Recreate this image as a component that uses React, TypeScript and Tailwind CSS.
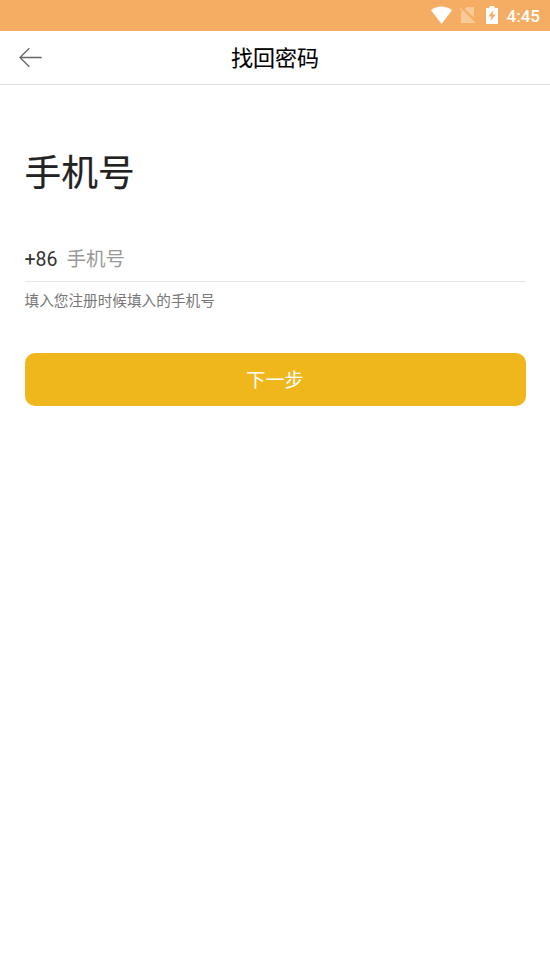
const StatusBar = () => (
  <div className="flex h-[30.5px] items-center justify-end bg-[#f5ad63] pr-2.5 text-white">
    <svg className="mr-[7px]" width="22" height="18" viewBox="0 0 22 18">
      <path d="M10.5 18 0 4.2Q4.8 0.5 10.5 0.5T21 4.2Z" fill="currentColor" />
    </svg>
    <svg className="mr-2.5 opacity-35" width="16" height="18" viewBox="0 0 16 18">
      <path d="M6.5 1H14v10.8L4.7 2.7ZM2.5 5.2 14 16.5V17H1V6.6Z" fill="currentColor" />
      <path d="m0.3 2.5 14.7 14.5" stroke="currentColor" strokeWidth="1.2" />
    </svg>
    <svg className="mr-[9px]" width="12" height="18" viewBox="0 0 12 18">
      <path d="M3.5 0h5v2H12v16H0V2h3.5Z" fill="currentColor" />
      <path d="M7.5 4 2.3 10.5h3.2L4.5 15l5.2-6.5H6.5Z" fill="#f5ad63" />
    </svg>
    <span className="pt-0.5 text-[17px] font-medium leading-none">4:45</span>
  </div>
);

const Header = () => (
  <header className="grid h-[54.5px] grid-cols-[1fr_auto_1fr] items-center border-b border-[#dedede] px-[18px]">
    <button type="button" aria-label="返回" className="text-[#666]">
      <svg width="25" height="22" viewBox="0 0 25 22" fill="none">
        <path d="M23.7 11.5H2M11.3 2.2 2 11.5l9.3 9.3" stroke="currentColor" strokeWidth="1.3" />
      </svg>
    </button>
    <h1 className="pt-1 text-[22px] leading-none text-black [-webkit-text-stroke:0.1px]">
      找回密码
    </h1>
  </header>
);

const App = () => {
  return (
    <div className="min-h-[979px] bg-white font-[Roboto,'Noto_Sans_CJK_SC',sans-serif]">
      <StatusBar />
      <Header />
      <main className="px-[24.5px] pt-[62px]">
        <h2 className="text-[36.7px] leading-[54px] text-[#222] [-webkit-text-stroke:0.2px]">
          手机号
        </h2>
        <form className="mt-[34px]">
          <label className="flex h-[47px] items-center border-b border-[#e5e5e5] pt-[3px] text-[19.5px] text-[#333]">
            <span className="mr-[9px]">+86</span>
            <input
              type="tel"
              placeholder="手机号"
              className="min-w-0 flex-1 outline-none placeholder:text-[#999]"
            />
          </label>
          <p className="mt-2 text-[14.65px] leading-[22px] text-[#777]">填入您注册时候填入的手机号</p>
          <button
            type="button"
            className="mt-[41px] h-[53px] w-full rounded-[10px] bg-[#f0b71d] pt-1 text-[19.2px] text-white"
          >
            下一步
          </button>
        </form>
      </main>
    </div>
  );
};

export default App;
